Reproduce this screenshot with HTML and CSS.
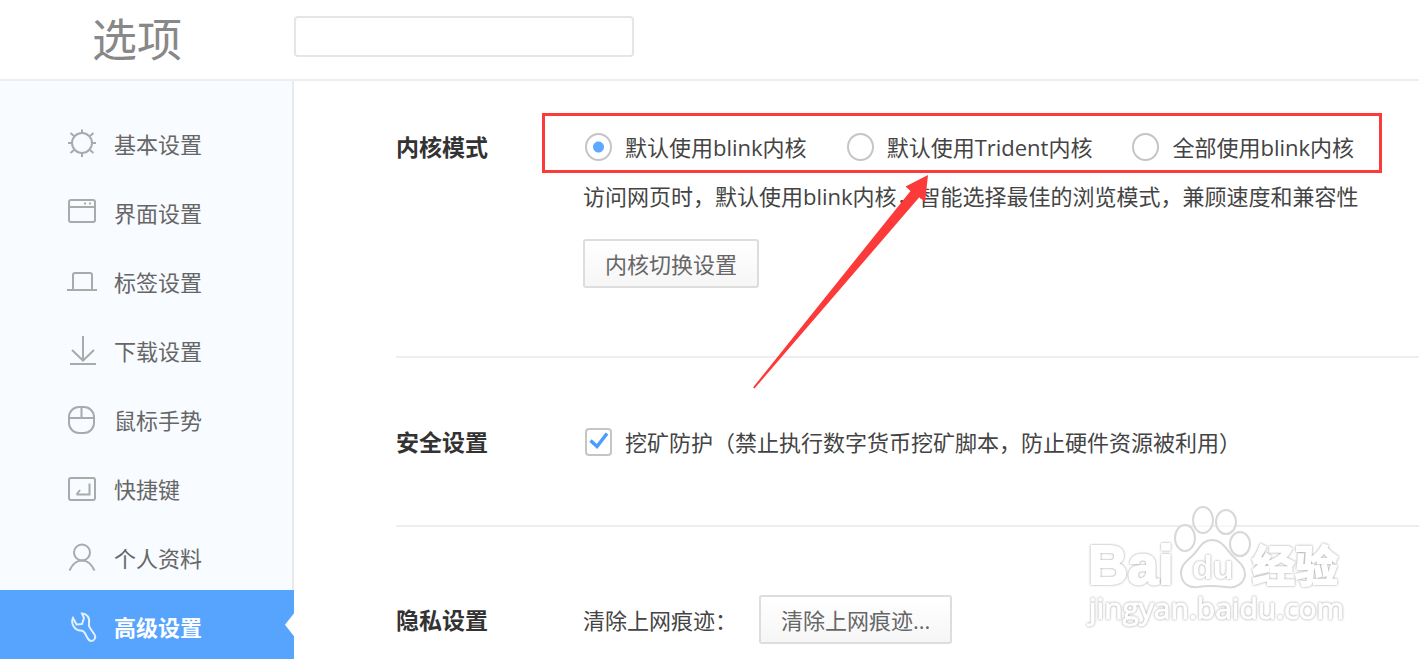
FILE: index.html
```html
<!DOCTYPE html>
<html lang="zh-CN">
<head>
<meta charset="utf-8">
<title>选项</title>
<link rel="stylesheet" href="styles.css">
</head>
<body>
<header class="header">
  <h1 class="brand">选项</h1>
  <input class="search" type="text" aria-label="搜索选项">
</header>
<div class="body">
  <nav class="sidebar">
    <a class="item" href="#basic">
      <svg class="icon" viewBox="0 0 32 32"><circle cx="16" cy="15" r="10"/><path d="M16 1.500v4M16 25v4M2 15h4M26 15h4M4.500 5l3.500 3M27.500 5l-3.500 3M4.500 25l3.500-3M27.500 25l-3.500-3"/></svg>
      <span>基本设置</span></a>
    <a class="item" href="#ui">
      <svg class="icon" viewBox="0 0 32 32"><rect x="3" y="3" width="26" height="22" rx="2"/><path d="M3 10h26M18 6.500h2M23 6.500h2"/></svg>
      <span>界面设置</span></a>
    <a class="item" href="#tabs">
      <svg class="icon" viewBox="0 0 32 32"><path d="M1 24h30M7 24V9q0-2 2-2h15q2 0 2 2v15"/></svg>
      <span>标签设置</span></a>
    <a class="item" href="#download">
      <svg class="icon" viewBox="0 0 32 32"><path d="M4 29h26M17 1v24M6 15l11 10.500L28 15"/></svg>
      <span>下载设置</span></a>
    <a class="item" href="#mouse">
      <svg class="icon" viewBox="0 0 32 32"><rect x="3" y="3" width="25" height="26" rx="10"/><path d="M3 14h25M15.500 3v11"/></svg>
      <span>鼠标手势</span></a>
    <a class="item" href="#keys">
      <svg class="icon" viewBox="0 0 32 32"><rect x="3" y="5" width="26" height="22" rx="2"/><path d="M23.500 10.500v11H10.500M14 17l-3.500 4.500"/></svg>
      <span>快捷键</span></a>
    <a class="item" href="#profile">
      <svg class="icon" viewBox="0 0 32 32"><circle cx="16" cy="10.500" r="8"/><path d="M3.500 28.500Q8 18.500 16 18.500T28.500 28.500"/></svg>
      <span>个人资料</span></a>
    <a class="item active" href="#advanced" aria-current="page">
      <svg class="icon" viewBox="0 0 32 32"><path d="M16 2.500c4.500 0 8 4 7 9-.4 2-.4 3.500 1 5.500l4.500 6.500c2 3-.5 6.500-3 6.500-2 0-3-1-4-3l-3-5.500c-1-1.500-2-2-4-2-6 0-10-7-7.500-12.500l3.500 6.500 5.500-.5 2-6z"/></svg>
      <span>高级设置</span></a>
  </nav>
  <main class="main">
    <section class="section kernel">
      <h2 class="title">内核模式</h2>
      <div class="content">
        <div class="options">
          <label class="choice"><input class="radio" type="radio" name="kernel" checked>默认使用blink内核</label>
          <label class="choice"><input class="radio" type="radio" name="kernel">默认使用Trident内核</label>
          <label class="choice"><input class="radio" type="radio" name="kernel">全部使用blink内核</label>
        </div>
        <p class="hint">访问网页时，默认使用blink内核，智能选择最佳的浏览模式，兼顾速度和兼容性</p>
        <button class="button" type="button">内核切换设置</button>
      </div>
      <div class="highlight"></div>
      <svg class="arrow" viewBox="0 0 180 216" aria-hidden="true"><path d="M178 2L155.500 13.500L160.500 18L3 214.500L4.500 215.500L169.500 24L175 29.500Z"/></svg>
    </section>
    <section class="section safety">
      <h2 class="title">安全设置</h2>
      <div class="content">
        <label class="choice"><input class="check" type="checkbox" checked>挖矿防护（禁止执行数字货币挖矿脚本，防止硬件资源被利用）</label>
      </div>
    </section>
    <section class="section privacy">
      <h2 class="title">隐私设置</h2>
      <div class="content line">
        <span>清除上网痕迹：</span>
        <button class="button" type="button">清除上网痕迹...</button>
      </div>
    </section>
  </main>
</div>
<svg class="watermark" viewBox="0 0 270 130" aria-hidden="true">
  <ellipse cx="105" cy="38" rx="10" ry="13"/>
  <ellipse cx="123" cy="20" rx="10" ry="13"/>
  <ellipse cx="146" cy="22" rx="10" ry="12"/>
  <ellipse cx="160" cy="44" rx="10" ry="12"/>
  <path d="M132 40C123 40 120 47 115 53C110 59 100 64 101 74C102 84 109 88 118 87C128 85 137 86 146 87C156 89 165 83 165 74C165 64 155 60 150 53C145 47 141 40 132 40Z"/>
  <text class="mark mark-bai" x="8" y="84">Bai</text>
  <text class="mark mark-du" x="112" y="79">du</text>
  <text class="mark mark-cn" x="172" y="82">经验</text>
  <text class="mark mark-url" x="9" y="119">jingyan.baidu.com</text>
</svg>
</body>
</html>
```

FILE: styles.css
```css
* {
  box-sizing: border-box;
}

body {
  display: flex;
  flex-direction: column;
  height: 100vh;
  margin: 0;
  overflow: hidden;
  position: relative;
  background: #fff;
  color: #444;
  font: 22px/34px "Open Sans", "Noto Sans CJK SC", sans-serif;
}

.header {
  display: flex;
  flex: none;
  align-items: flex-start;
  height: 81px;
  border-bottom: 2px solid #eee;
}

.brand {
  width: 294px;
  margin: 0;
  padding: 8px 0 0 92px;
  color: #888;
  font-size: 45px;
  font-weight: 400;
  line-height: 64px;
}

.search {
  width: 340px;
  height: 41px;
  margin: 16px 0 0;
  padding: 0 12px;
  border: 2px solid #e5e5e5;
  border-radius: 4px;
  background: #fff;
  font: inherit;
}

.body {
  display: flex;
  flex: 1;
  min-height: 0;
}

.sidebar {
  display: flex;
  flex: none;
  flex-direction: column;
  width: 294px;
  padding-top: 27px;
  background: linear-gradient(to right, #f8fbff 292px, #e6ebf1 292px);
}

.item {
  display: flex;
  flex: 0 1 69px;
  align-items: center;
  gap: 16px;
  position: relative;
  min-height: 48px;
  padding: 4px 0 0 66px;
  color: #666;
  text-decoration: none;
}

.icon {
  width: 32px;
  height: 32px;
  fill: none;
  stroke: #aaa;
  stroke-width: 2;
}

.active {
  background: #57a4ff;
  color: #fff;
  font-weight: 700;
}

.active .icon {
  stroke: #e3f0ff;
}

.active::after {
  content: "";
  position: absolute;
  top: 23px;
  right: 0;
  width: 9px;
  height: 23px;
  background: #fff;
  clip-path: polygon(100% 0, 0 50%, 100% 100%);
}

.main {
  flex: 1;
  min-width: 0;
  padding-left: 102px;
}

.section {
  display: grid;
  grid-template-columns: 187px 1fr;
  position: relative;
  border-bottom: 2px solid #eee;
  white-space: nowrap;
}

.kernel {
  padding: 49px 0 68px;
}

.safety {
  padding: 67px 0 66px;
}

.privacy {
  align-items: center;
  padding-top: 68px;
  border-bottom: 0;
}

.title {
  margin: 0;
  color: #333;
  font-size: 23px;
  font-weight: 700;
}

.options {
  display: flex;
  gap: 38px;
}

.choice {
  display: flex;
  align-items: center;
}

.radio,
.check {
  appearance: none;
  flex: none;
  width: 27px;
  height: 28px;
  margin: 0 13px 0 2px;
  border: 2px solid #c5c5c5;
  background: #fff;
}

.radio {
  border-radius: 50%;
}

.radio:checked {
  background: radial-gradient(circle, #5caaff 5px, #fff 6px);
}

.check {
  border-radius: 4px;
}

.check:checked {
  background: url("data:image/svg+xml,%3Csvg xmlns='http://www.w3.org/2000/svg' viewBox='0 0 23 24'%3E%3Cpath d='M3.500 10.500l6.500 6L20 3.500' fill='none' stroke='%234a9dff' stroke-width='3.500'/%3E%3C/svg%3E") center / 23px 24px no-repeat;
}

.hint {
  margin: 15px 0 26px;
}

.button {
  display: block;
  height: 49px;
  padding: 0 20px;
  border: 2px solid #ddd;
  border-radius: 3px;
  background: linear-gradient(#fff, #f6f6f6);
  color: #666;
  font: inherit;
}

.line {
  display: flex;
  align-items: center;
  gap: 22px;
}

.highlight {
  position: absolute;
  top: 32px;
  left: 146px;
  width: 840px;
  height: 60px;
  border: 3px solid #fc3a3a;
  pointer-events: none;
}

.arrow {
  position: absolute;
  top: 92px;
  left: 354px;
  width: 180px;
  height: 216px;
  fill: #fc3a3a;
  pointer-events: none;
}

.watermark {
  position: absolute;
  right: 69px;
  bottom: 29px;
  width: 270px;
  height: 130px;
  fill: #fff;
  fill-opacity: 0.6;
  stroke: #d8d8d8;
  stroke-width: 2;
  pointer-events: none;
}

.mark {
  fill-opacity: 1;
  stroke: #fff;
  stroke-width: 2;
  filter: drop-shadow(0 0 1px #999);
}

.mark-bai {
  font: 700 55px "Liberation Sans", sans-serif;
}

.mark-du {
  stroke-width: 0;
  font: 700 34px "Liberation Sans", sans-serif;
}

.mark-cn {
  font: 700 43px "Noto Sans CJK SC", sans-serif;
}

.mark-url {
  stroke-width: 1;
  font: 30px "Open Sans", sans-serif;
}
```
